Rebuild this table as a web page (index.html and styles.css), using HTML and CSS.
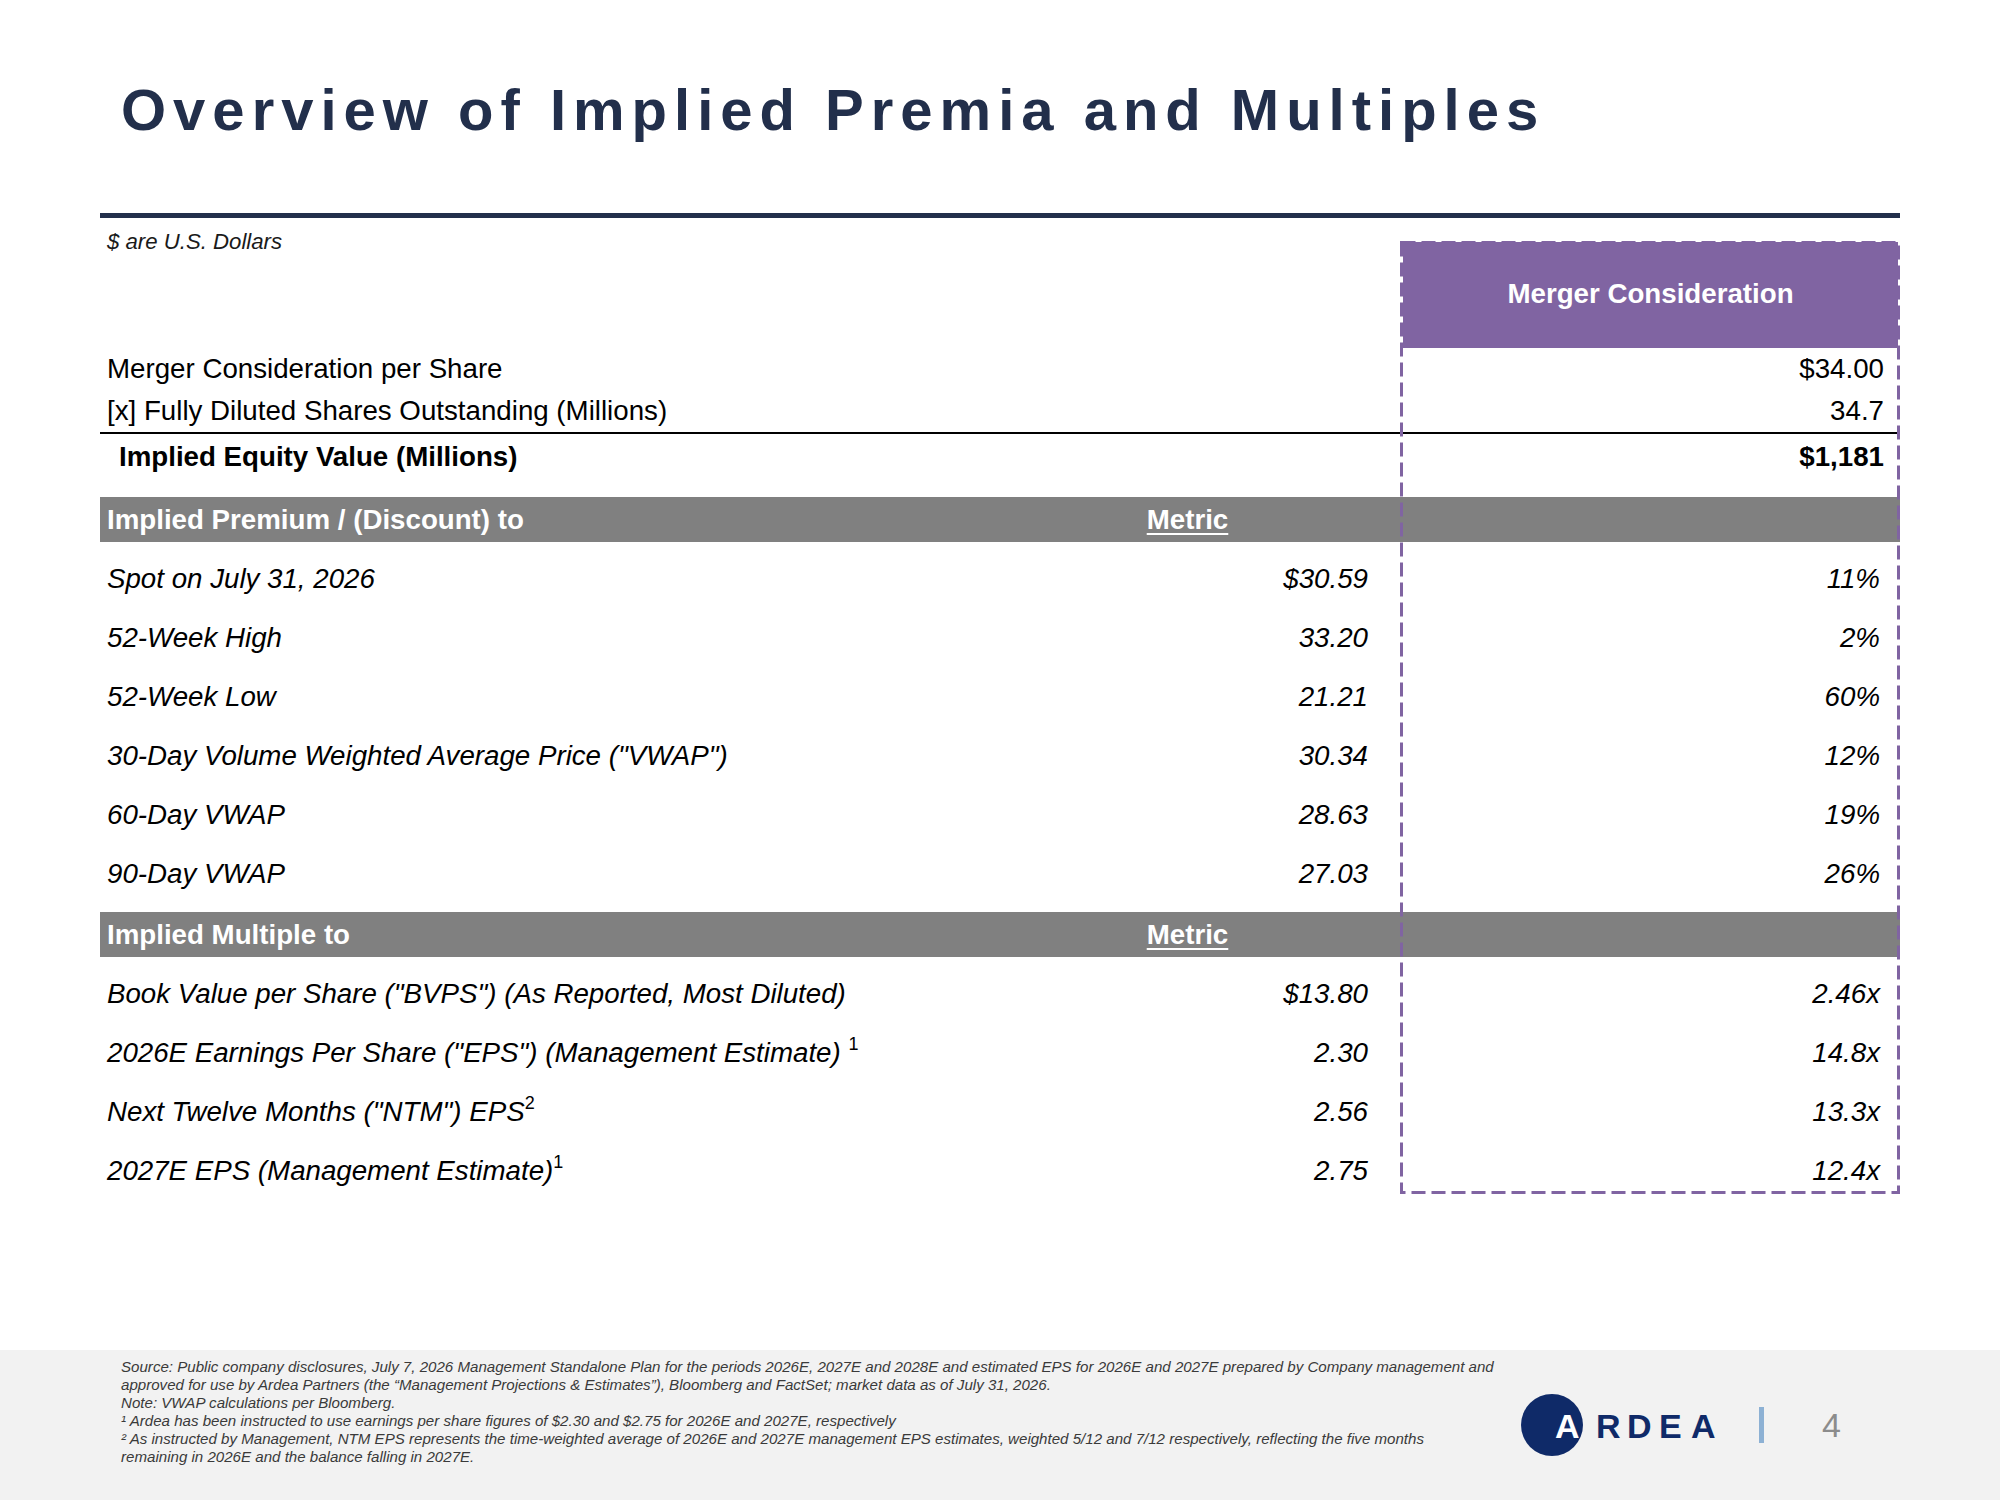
FILE: index.html
```html
<!DOCTYPE html>
<html lang="en">
<head>
<meta charset="utf-8">
<title>Overview of Implied Premia and Multiples</title>
<link rel="stylesheet" href="styles.css">
</head>
<body>
<div class="page">
  <main class="content">
    <h1 class="title">Overview of Implied Premia and Multiples</h1>
    <div class="rule-navy"></div>
    <div class="table">
      <div class="row head">
        <div class="c1 note">$ are U.S. Dollars</div>
        <div class="c2"></div>
        <div class="c3"><div class="mc-head">Merger Consideration</div></div>
      </div>
      <div class="row std"><div class="c1">Merger Consideration per Share</div><div class="c2"></div><div class="c3">$34.00</div></div>
      <div class="row std ruled"><div class="c1">[x] Fully Diluted Shares Outstanding (Millions)</div><div class="c2"></div><div class="c3">34.7</div></div>
      <div class="row total"><div class="c1">Implied Equity Value (Millions)</div><div class="c2"></div><div class="c3">$1,181</div></div>

      <div class="row bar"><div class="c1">Implied Premium / (Discount) to</div><div class="c2"><span class="metric">Metric</span></div><div class="c3"></div></div>
      <div class="group">
        <div class="row it"><div class="c1">Spot on July 31, 2026</div><div class="c2">$30.59</div><div class="c3">11%</div></div>
        <div class="row it"><div class="c1">52-Week High</div><div class="c2">33.20</div><div class="c3">2%</div></div>
        <div class="row it"><div class="c1">52-Week Low</div><div class="c2">21.21</div><div class="c3">60%</div></div>
        <div class="row it"><div class="c1">30-Day Volume Weighted Average Price ("VWAP")</div><div class="c2">30.34</div><div class="c3">12%</div></div>
        <div class="row it"><div class="c1">60-Day VWAP</div><div class="c2">28.63</div><div class="c3">19%</div></div>
        <div class="row it"><div class="c1">90-Day VWAP</div><div class="c2">27.03</div><div class="c3">26%</div></div>
      </div>

      <div class="row bar bar2"><div class="c1">Implied Multiple to</div><div class="c2"><span class="metric">Metric</span></div><div class="c3"></div></div>
      <div class="group">
        <div class="row it"><div class="c1">Book Value per Share ("BVPS") (As Reported, Most Diluted)</div><div class="c2">$13.80</div><div class="c3">2.46x</div></div>
        <div class="row it"><div class="c1">2026E Earnings Per Share ("EPS") (Management Estimate) <sup class="fn">1</sup></div><div class="c2">2.30</div><div class="c3">14.8x</div></div>
        <div class="row it"><div class="c1">Next Twelve Months ("NTM") EPS<sup class="fn">2</sup></div><div class="c2">2.56</div><div class="c3">13.3x</div></div>
        <div class="row it"><div class="c1">2027E EPS (Management Estimate)<sup class="fn">1</sup></div><div class="c2">2.75</div><div class="c3">12.4x</div></div>
      </div>

      <svg class="dash-box" width="500" height="953" viewBox="0 0 500 953" aria-hidden="true">
        <rect x="1.5" y="1.5" width="497" height="950" fill="none" stroke="#8064a2" stroke-width="3" stroke-dasharray="14 6"/>
      </svg>
    </div>
  </main>

  <footer class="footer">
    <div class="notes">
      Source: Public company disclosures, July 7, 2026 Management Standalone Plan for the periods 2026E, 2027E and 2028E and estimated EPS for 2026E and 2027E prepared by Company management and<br>
      approved for use by Ardea Partners (the “Management Projections &amp; Estimates”), Bloomberg and FactSet; market data as of July 31, 2026.<br>
      Note: VWAP calculations per Bloomberg.<br>
      ¹ Ardea has been instructed to use earnings per share figures of $2.30 and $2.75 for 2026E and 2027E, respectively<br>
      ² As instructed by Management, NTM EPS represents the time-weighted average of 2026E and 2027E management EPS estimates, weighted 5/12 and 7/12 respectively, reflecting the five months<br>
      remaining in 2026E and the balance falling in 2027E.
    </div>
    <div class="brand">
      <svg class="logo" width="205" height="64" viewBox="0 0 205 64">
        <circle cx="31" cy="32" r="31" fill="#0f2a68"/>
        <text x="34" y="45" class="logo-a">A</text>
        <text x="75 106 138 170" y="45" class="logo-t">RDEA</text>
      </svg>
      <div class="brand-bar"></div>
      <span class="page-num">4</span>
    </div>
  </footer>
</div>
</body>
</html>
```

FILE: styles.css
```css
* { box-sizing: border-box; }
html, body { margin: 0; padding: 0; background: #ffffff; }
body { font-family: "Liberation Sans", Arial, sans-serif; color: #000; }

.page {
  width: 2000px;
  height: 1500px;
  display: flex;
  flex-direction: column;
}

.content {
  margin: 0 100px;
  width: 1800px;
}

.title {
  margin: 81px 0 0 0;
  padding-left: 21px;
  font-size: 58px;
  line-height: 58px;
  font-weight: bold;
  letter-spacing: 7px;
  color: #222f4b;
  white-space: nowrap;
}

.rule-navy {
  margin-top: 74px;
  height: 5px;
  background: #222f4b;
}

.table {
  position: relative;
  margin-top: 11px;
}

.row {
  display: grid;
  grid-template-columns: 907px 393px 500px;
  font-size: 27.7px;
  white-space: nowrap;
}

.c1 { padding-left: 7px; }
.c2 { text-align: right; padding-right: 32px; }
.c3 { text-align: right; padding-right: 16px; }

.head .note {
  font-size: 22.2px;
  line-height: 25px;
  font-style: italic;
  color: #1a1a1a;
  align-self: start;
}
.head .c3 { padding: 13px 2px 0 3px; }
.mc-head {
  height: 106px;
  background: #8064a2;
  color: #fff;
  font-weight: bold;
  display: flex;
  align-items: center;
  justify-content: center;
  padding-bottom: 2px;
}

.std { line-height: 42px; }
.ruled { border-bottom: 2px solid #000; }
.total { line-height: 45px; font-weight: bold; }
.total .c1 { padding-left: 19px; }

.bar {
  margin-top: 18px;
  line-height: 45px;
  background: #808080;
  color: #fff;
  font-weight: bold;
}
.bar2 { margin-top: 9px; }
.bar .c2 { text-align: center; }
.metric {
  text-decoration: underline;
  text-decoration-thickness: 2px;
  text-underline-offset: 4px;
}

.group { margin-top: 7px; }
.it { line-height: 59px; font-style: italic; }
.it .c3 { padding-right: 20px; }

.fn {
  font-style: normal;
  font-size: 18px;
  line-height: 0;
  vertical-align: 12px;
}

.dash-box {
  position: absolute;
  left: 1300px;
  top: 12px;
  pointer-events: none;
}

.footer {
  margin-top: auto;
  height: 150px;
  background: #f2f2f2;
  display: flex;
  align-items: center;
  padding: 0 159px 0 121px;
}

.notes {
  align-self: flex-start;
  padding-top: 8px;
  font-size: 15.1px;
  line-height: 18.1px;
  font-style: italic;
  color: #3a3a3a;
  white-space: nowrap;
}

.brand {
  margin-left: auto;
  display: flex;
  align-items: center;
}
.logo { display: block; }
.logo-a, .logo-t {
  font-family: "Liberation Sans", Arial, sans-serif;
  font-weight: bold;
  font-size: 34px;
}
.logo-a { fill: #ffffff; }
.logo-t { fill: #0f2a68; }

.brand-bar {
  margin-left: 33px;
  width: 5px;
  height: 36px;
  background: #8db1d4;
}
.page-num {
  margin-left: 58px;
  font-size: 34px;
  line-height: 40px;
  color: #8c8c8c;
}
```
